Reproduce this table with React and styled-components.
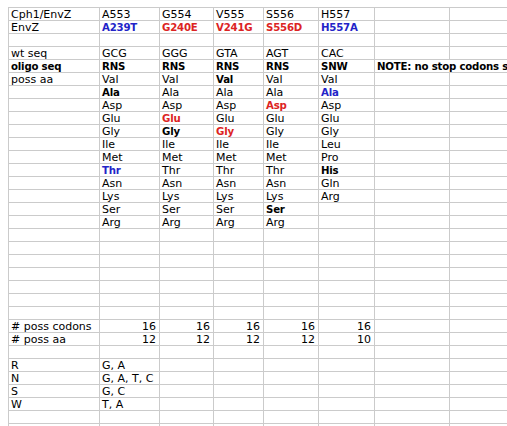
import styled, { createGlobalStyle } from "styled-components";

const GlobalStyle = createGlobalStyle`
  html, body {
    margin: 0;
    padding: 0;
    background: #ffffff;
    overflow: hidden;
  }
  body {
    padding: 7px 0 0 8px;
    font-family: "DejaVu Sans", Verdana, sans-serif;
  }
`;

const BLUE = "#2323c8";
const RED = "#dc2323";

const b = (t, c) => ({ t, bold: true, color: c });
const r = (t) => ({ t, right: true });

const ROWS = [
  ["Cph1/EnvZ", "A553", "G554", "V555", "S556", "H557"],
  ["EnvZ", b("A239T", BLUE), b("G240E", RED), b("V241G", RED), b("S556D", RED), b("H557A", BLUE)],
  [],
  ["wt seq", "GCG", "GGG", "GTA", "AGT", "CAC"],
  [b("oligo seq"), b("RNS"), b("RNS"), b("RNS"), b("RNS"), b("SNW"), { ...b("NOTE: no stop codons s"), span: 2 }],
  ["poss aa", "Val", "Val", b("Val"), "Val", "Val"],
  ["", b("Ala"), "Ala", "Ala", "Ala", b("Ala", BLUE)],
  ["", "Asp", "Asp", "Asp", b("Asp", RED), "Asp"],
  ["", "Glu", b("Glu", RED), "Glu", "Glu", "Glu"],
  ["", "Gly", b("Gly"), b("Gly", RED), "Gly", "Gly"],
  ["", "Ile", "Ile", "Ile", "Ile", "Leu"],
  ["", "Met", "Met", "Met", "Met", "Pro"],
  ["", b("Thr", BLUE), "Thr", "Thr", "Thr", b("His")],
  ["", "Asn", "Asn", "Asn", "Asn", "Gln"],
  ["", "Lys", "Lys", "Lys", "Lys", "Arg"],
  ["", "Ser", "Ser", "Ser", b("Ser"), ""],
  ["", "Arg", "Arg", "Arg", "Arg", ""],
  [], [], [], [], [], [], [],
  ["# poss codons", r("16"), r("16"), r("16"), r("16"), r("16")],
  ["# poss aa", r("12"), r("12"), r("12"), r("12"), r("10")],
  [],
  ["R", "G, A"],
  ["N", "G, A, T, C"],
  ["S", "G, C"],
  ["W", "T, A"],
  [],
  [],
];

const COLS = 8;

const Sheet = styled.div`
  display: grid;
  grid-template-columns: 91px 60px 54px 50px 55px 56px 75px 100px;
  grid-auto-rows: 13px;
  width: max-content;
  border-left: 1px solid #cbcbcb;
  border-top: 1px solid #cbcbcb;
`;

const Cell = styled.div`
  box-sizing: border-box;
  grid-column: span ${(p) => p.$span};
  border-right: 1px solid #cbcbcb;
  border-bottom: 1px solid #cbcbcb;
  padding: 0 3px 0 2px;
  font-size: ${(p) => (p.$bold ? "10.2px" : "11px")};
  letter-spacing: ${(p) => (p.$bold ? "-0.2px" : "0")};
  line-height: 13px;
  white-space: nowrap;
  overflow: hidden;
  font-weight: ${(p) => (p.$bold ? 700 : 400)};
  color: ${(p) => p.$color || "#000000"};
  text-align: ${(p) => (p.$right ? "right" : "left")};
`;

const normalize = (c) => (typeof c === "string" ? { t: c } : c || { t: "" });

const buildRow = (row, ri) => {
  const cells = [];
  let col = 0;
  let i = 0;
  while (col < COLS) {
    const c = normalize(row[i]);
    const span = c.span || 1;
    cells.push(
      <Cell key={`${ri}-${col}`} $span={span} $bold={c.bold} $color={c.color} $right={c.right}>
        {c.t}
      </Cell>
    );
    col += span;
    i += 1;
  }
  return cells;
};

export default function App() {
  return (
    <>
      <GlobalStyle />
      <Sheet>{ROWS.map(buildRow)}</Sheet>
    </>
  );
}
